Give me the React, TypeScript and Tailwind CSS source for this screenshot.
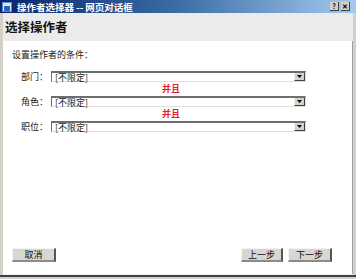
import React from "react";

const font = { fontFamily: '"SimSun","Noto Sans CJK SC","Liberation Sans",sans-serif' };

function Select() {
  return (
    <div className="flex h-[11px] w-[255px] bg-white border-t-2 border-l border-t-[#6e6e6e] border-l-[#6e6e6e] border-r border-b border-r-[#e0e0e0] border-b-[#e0e0e0]">
      <div className="flex-1 pl-[3px] text-[9px] leading-[9px] text-[#222]">[不限定]</div>
      <div className="w-[11px] h-full bg-[#d4d0c8] border-l border-l-[#f4f4f4] border-r border-b border-r-[#404040] border-b-[#404040] flex items-center justify-center">
        <svg width="5" height="3" viewBox="0 0 5 3"><path d="M0 0h5L2.5 3z" fill="#000" /></svg>
      </div>
    </div>
  );
}

function Row({ label }: { label: string }) {
  return (
    <div className="flex items-center h-[11px]">
      <div className="w-[30px] pl-[18px] box-content text-[9px] leading-[11px] text-[#222] whitespace-nowrap">{label}</div>
      <Select />
    </div>
  );
}

function And() {
  return (
    <div className="h-[14px] pl-[159px] text-[9px] leading-[14px] text-[#e8202a] font-bold">并且</div>
  );
}

function Btn({ children, w }: { children: React.ReactNode; w: string }) {
  return (
    <div className={`${w} h-[14px] bg-[#d8d6d0] border-t border-l border-t-[#f4f4f4] border-l-[#f4f4f4] border-r-2 border-b-2 border-r-[#555] border-b-[#8a8a8a] flex items-center justify-center text-[9px] text-[#111]`}>
      {children}
    </div>
  );
}

export default function App() {
  return (
    <div style={font} className="w-[356px] h-[279px] bg-[#d4d0c8] flex flex-col overflow-hidden">
      <div className="h-[13px] flex items-center bg-gradient-to-r from-[#0a246a] via-[#3a6ea5] to-[#a6caf0] pl-[2px] pr-[6px]">
        <div className="w-[10px] h-[10px] bg-[#dbe8f8] border border-[#5a8ad0] flex items-end justify-center">
          <div className="w-[6px] h-[5px] bg-[#2a62c0]" />
        </div>
        <div className="ml-[5px] text-[9.5px] leading-[12px] font-bold text-white whitespace-nowrap">操作者选择器 -- 网页对话框</div>
        <div className="flex-1" />
        <div className="w-[9px] h-[9px] bg-[#d4d0c8] border-r border-b border-[#404040] flex items-center justify-center text-[7px] leading-none font-bold text-black">?</div>
        <div className="ml-[2px] w-[9px] h-[9px] bg-[#d4d0c8] border-r border-b border-[#404040] flex items-center justify-center text-[7px] leading-none font-bold text-black">✕</div>
      </div>
      <div className="flex-1 flex flex-col pl-[3px] pr-[3px]">
        <div className="h-[28px] bg-[#ebebeb] flex items-center pl-[2px] text-[12.5px] font-bold text-[#111]">选择操作者</div>
        <div className="flex-1 bg-white border-r border-r-[#a0a0a0] flex flex-col pt-[8px]">
          <div className="h-[12px] pl-[9px] text-[9px] leading-[12px] text-[#222]">设置操作者的条件：</div>
          <div className="h-[10px]" />
          <Row label="部门：" />
          <And />
          <Row label="角色：" />
          <And />
          <Row label="职位：" />
          <div className="flex-1" />
          <div className="flex items-center pl-[9px] pr-[20px] pb-[12px]">
            <Btn w="w-[44px]">取消</Btn>
            <div className="flex-1" />
            <Btn w="w-[42px]">上一步</Btn>
            <div className="w-[5px]" />
            <Btn w="w-[44px]">下一步</Btn>
          </div>
        </div>
        <div className="h-[1px] bg-[#f0f0f0]" />
      </div>
      <div className="h-[2px] bg-[#404040]" />
      <div className="h-[2px] bg-[#d4d0c8]" />
    </div>
  );
}
